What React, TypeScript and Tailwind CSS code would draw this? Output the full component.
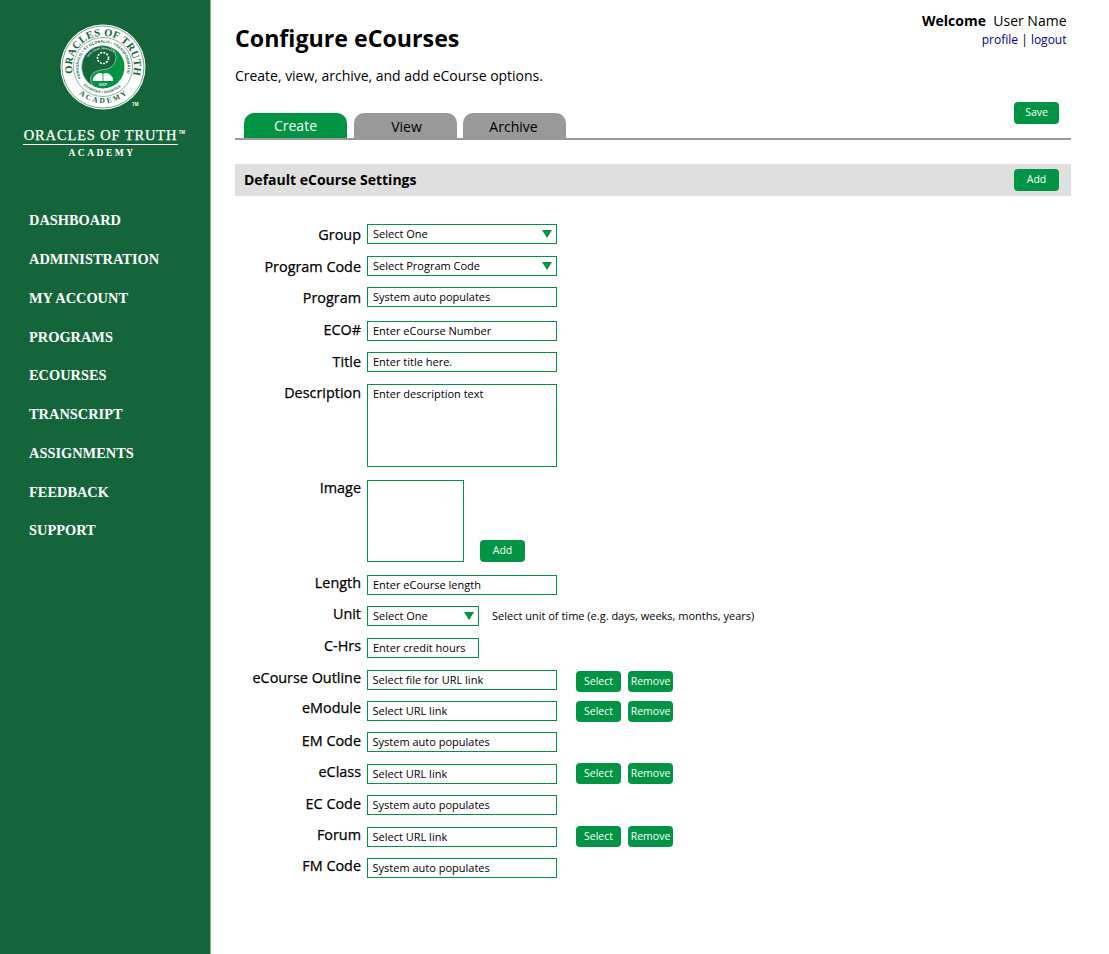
import React from "react";

const nav = ["DASHBOARD", "ADMINISTRATION", "MY ACCOUNT", "PROGRAMS", "ECOURSES", "TRANSCRIPT", "ASSIGNMENTS", "FEEDBACK", "SUPPORT"];

function Logo() {
  return (
    <svg width="86" height="86" viewBox="0 0 86 86" className="block">
      <defs>
        <path id="topArc" d="M 12.7 49.4 A 31 31 0 1 1 73.3 49.4" />
        <path id="botArc" d="M 11.8 61 A 36 36 0 0 0 74.2 61" />
        <path id="midArc" d="M 21.5 55 A 24.5 24.5 0 1 1 64.5 55" />
        <path id="midBot" d="M 19.5 56 A 27.5 27.5 0 0 0 66.5 56" />
        <path id="inArc" d="M 27 35 A 18 18 0 0 1 59 35" />
      </defs>
      <circle cx="43" cy="43" r="42.5" fill="#ffffff" />
      <circle cx="43" cy="43" r="41" fill="none" stroke="#14663a" strokeWidth="0.6" />
      <circle cx="43" cy="43" r="29.5" fill="none" stroke="#14663a" strokeWidth="0.5" />
      <circle cx="43" cy="43" r="21.5" fill="#009444" />
      <path d="M43 21.5 A21.5 21.5 0 0 0 33 62 C 26 50 36 46 45 45.5 A 12 12 0 0 0 43 21.5Z" fill="#14663a" stroke="#ffffff" strokeWidth="0.5" />
      <circle cx="43" cy="34" r="5.5" fill="none" stroke="#ffffff" strokeWidth="1.6" strokeDasharray="2 1.2" />
      <path d="M33 54 Q38 47 43 50 Q48 47 53 54 L53 57 L33 57 Z" fill="#ffffff" />
      <path d="M43 50 L43 57" stroke="#009444" strokeWidth="0.8" />
      <text fontFamily="'Liberation Serif', serif" fontSize="10.5" fontWeight="700" fill="#14663a" letterSpacing="0.3">
        <textPath href="#topArc">ORACLES OF TRUTH</textPath>
      </text>
      <text fontFamily="'Liberation Serif', serif" fontSize="7.5" fontWeight="700" fill="#14663a" letterSpacing="2.2">
        <textPath href="#botArc" startOffset="15%">ACADEMY</textPath>
      </text>
      <text fontFamily="'Liberation Sans', sans-serif" fontSize="3.8" fontWeight="700" fill="#14663a" letterSpacing="0.1">
        <textPath href="#midArc" startOffset="1%">PERSONALIS • ET GLOBALIS • TRANSFORMATIO</textPath>
      </text>
      <text fontFamily="'Liberation Sans', sans-serif" fontSize="3.6" fontWeight="700" fill="#14663a" letterSpacing="0.15">
        <textPath href="#midBot" startOffset="12%">DIVINITAS • DIGNITAS</textPath>
      </text>
      <text fontFamily="'Liberation Sans', sans-serif" fontSize="2.4" fontWeight="700" fill="#ffffff" letterSpacing="0.15">
        <textPath href="#inArc" startOffset="6%">HOS VINCE ORACULA</textPath>
      </text>
      <text x="43" y="61.5" textAnchor="middle" fontFamily="'Liberation Sans', sans-serif" fontSize="2.8" fontWeight="700" fill="#ffffff">SOCP</text>
    </svg>
  );
}

function Btn({ children, className = "" }: { children: React.ReactNode; className?: string }) {
  return (
    <div className={"flex h-[21px] w-[45px] items-center justify-center rounded-[4px] bg-[#009444] text-[10.5px] text-white " + className}>
      {children}
    </div>
  );
}

function Box({ text, w = "w-[190px]", arrow = false, pad = "pl-[5px]" }: { text: string; w?: string; arrow?: boolean; pad?: string }) {
  return (
    <div className={"relative flex h-[20px] shrink-0 items-center border border-[#009444] text-[11px] text-black " + pad + " " + w}>
      {text}
      {arrow && (
        <svg width="10" height="8" viewBox="0 0 10 8" className="absolute right-[4.5px] top-[5px]">
          <path d="M0 0H10L5 8Z" fill="#009444" />
        </svg>
      )}
    </div>
  );
}

function Label({ children, shift = "" }: { children: React.ReactNode; shift?: string }) {
  return (
    <div className={"w-[126px] shrink-0 text-right text-[14.4px] leading-[20px] text-black [-webkit-text-stroke:0.25px_#000] " + shift}>
      {children}
    </div>
  );
}

function LinkRow({ label, text, mt, shift, btn }: { label: string; text: string; mt: string; shift: string; btn: string }) {
  return (
    <div className={"flex h-[20px] gap-[6px] " + mt}>
      <Label shift={shift}>{label}</Label>
      <Box text={text} pad="pl-[4.5px]" />
      <div className={"ml-[13px] flex gap-[7px] " + btn}>
        <Btn>Select</Btn>
        <Btn>Remove</Btn>
      </div>
    </div>
  );
}

function Row({ label, text, mt, arrow, w, shift = "", pad }: { label: string; text: string; mt: string; arrow?: boolean; w?: string; shift?: string; pad?: string }) {
  return (
    <div className={"flex h-[20px] gap-[6px] " + mt}>
      <Label shift={shift}>{label}</Label>
      <Box text={text} arrow={arrow} w={w} pad={pad} />
    </div>
  );
}

export default function App() {
  return (
    <div className="flex min-h-[954px] bg-white font-['Open_Sans',sans-serif] text-black">
      <aside className="w-[211px] shrink-0 border-r border-[#7fb096] bg-[#14663a]">
        <div className="flex flex-col items-center pt-[24px]">
          <div className="relative ml-[-5px]">
            <Logo />
            <span className="absolute bottom-[3px] right-[7px] font-['Liberation_Sans',sans-serif] text-[4.5px] font-bold leading-[5px] text-white">TM</span>
          </div>
          <div className="relative mt-[17px] ml-[-9px] w-[155px] border-b border-white text-center font-['Liberation_Serif',serif] text-[14.5px] font-normal leading-[17px] tracking-[0.85px] whitespace-nowrap text-white [-webkit-text-stroke:0.25px_#fff]">
            ORACLES OF TRUTH
            <span className="absolute right-[-7px] top-[3px] font-['Liberation_Sans',sans-serif] text-[4.5px] font-bold leading-[5px] tracking-normal [-webkit-text-stroke:0px]">TM</span>
          </div>
          <div className="mt-[2px] ml-[-6px] font-['Liberation_Serif',serif] text-[9.5px] font-bold leading-[12px] tracking-[2.5px] text-white">ACADEMY</div>
        </div>
        <nav className="mt-[51.4px] flex flex-col gap-[17.75px] pl-[29px]">
          {nav.map((n) => (
            <div key={n} className="font-['Liberation_Serif',serif] text-[14.4px] font-bold leading-[21px] whitespace-nowrap text-white">
              {n}
            </div>
          ))}
        </nav>
      </aside>

      <main className="relative w-[860px] pl-[24px]">
        <div className="absolute right-[4.5px] top-[11px] text-right">
          <div className="text-[14px] leading-[20px]">
            <span className="font-bold">Welcome</span>&nbsp; User Name
          </div>
          <div className="text-[12px] leading-[18px]">
            <span className="text-[#000099]">profile</span> | <span className="text-[#000099]">logout</span>
          </div>
        </div>

        <h1 className="pt-[21px] text-[23.2px] font-bold leading-[34px]">Configure eCourses</h1>
        <p className="mt-[11px] text-[14px] leading-[20px] tracking-[-0.02px]">Create, view, archive, and add eCourse options.</p>

        <div className="relative mt-[27px] flex border-b-2 border-[#999999] pl-[9px]">
          <div className="flex h-[25px] w-[103px] items-center justify-center rounded-t-[10px] bg-[#009444] pb-[1px] text-[14px] text-white">Create</div>
          <div className="ml-[7px] flex h-[25px] w-[103px] items-center justify-center rounded-t-[10px] bg-[#999999] pl-[2px] pt-[1px] text-[14px]">View</div>
          <div className="ml-[6px] flex h-[25px] w-[103px] items-center justify-center rounded-t-[10px] bg-[#999999] pr-[2px] pt-[1px] text-[14px]">Archive</div>
          <Btn className="absolute right-[12px] top-[-11px] !h-[22px]">Save</Btn>
        </div>

        <div className="mt-[24px] flex h-[32px] items-center justify-between bg-[#dfdfdf] pl-[9px] pr-[12px]">
          <span className="pb-[2px] text-[14px] font-bold">Default eCourse Settings</span>
          <Btn className="!h-[22px]">Add</Btn>
        </div>

        <div className="mt-[28px] flex flex-col">
          <Row label="Group" text="Select One" mt="" arrow shift="mt-[1px]" />
          <Row label="Program Code" text="Select Program Code" mt="mt-[12px]" arrow shift="mt-[1px]" />
          <Row label="Program" text="System auto populates" mt="mt-[11px]" shift="mt-[1px]" />
          <Row label="ECO#" text="Enter eCourse Number" mt="mt-[14px]" shift="mt-[-1px]" />
          <Row label="Title" text="Enter title here." mt="mt-[11px]" />
          <div className="mt-[12px] flex gap-[6px]">
            <Label shift="mt-[-1px]">Description</Label>
            <div className="h-[83px] w-[190px] border border-[#009444] px-[5px] py-[1px] text-[11px] leading-[16px]">Enter description text</div>
          </div>
          <div className="mt-[13px] flex gap-[6px]">
            <Label shift="mt-[-2px]">Image</Label>
            <div className="h-[82px] w-[97px] border border-[#009444]" />
            <Btn className="ml-[10px] mt-[60px] !h-[22px]">Add</Btn>
          </div>
          <Row label="Length" text="Enter eCourse length" mt="mt-[13px]" shift="mt-[-2px]" />
          <div className="mt-[11px] flex h-[20px] gap-[6px]">
            <Label shift="mt-[-2px]">Unit</Label>
            <Box text="Select One" w="w-[112px]" arrow />
            <span className="ml-[7px] text-[11px] leading-[20px]">Select unit of time (e.g. days, weeks, months, years)</span>
          </div>
          <Row label="C-Hrs" text="Enter credit hours" mt="mt-[12px]" w="w-[112px]" shift="mt-[-2px]" />
          <LinkRow label="eCourse Outline" text="Select file for URL link" mt="mt-[12px]" shift="mt-[-2px]" btn="mt-[1px]" />
          <LinkRow label="eModule" text="Select URL link" mt="mt-[11px]" shift="mt-[-3px]" btn="" />
          <Row label="EM Code" text="System auto populates" mt="mt-[11px]" shift="mt-[-1px]" pad="pl-[4.5px]" />
          <LinkRow label="eClass" text="Select URL link" mt="mt-[12px]" shift="mt-[-2px]" btn="mt-[-1px]" />
          <Row label="EC Code" text="System auto populates" mt="mt-[11px]" shift="mt-[-1px]" pad="pl-[4.5px]" />
          <LinkRow label="Forum" text="Select URL link" mt="mt-[12px]" shift="mt-[-2px]" btn="mt-[-1px]" />
          <Row label="FM Code" text="System auto populates" mt="mt-[11px]" shift="mt-[-2px]" pad="pl-[4.5px]" />
        </div>
      </main>
    </div>
  );
}
